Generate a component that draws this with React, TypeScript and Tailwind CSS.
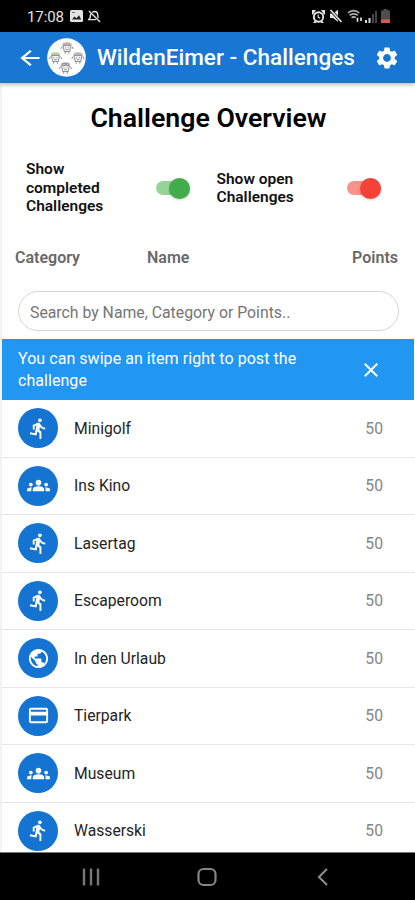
import type { IconType } from "react-icons";
import {
  MdArrowBack,
  MdClose,
  MdDirectionsRun,
  MdGroups,
  MdPayment,
  MdPublic,
  MdSettings,
} from "react-icons/md";

type TChallenge = {
  name: string;
  points: number;
  icon: IconType;
};

const challenges: TChallenge[] = [
  { name: "Minigolf", points: 50, icon: MdDirectionsRun },
  { name: "Ins Kino", points: 50, icon: MdGroups },
  { name: "Lasertag", points: 50, icon: MdDirectionsRun },
  { name: "Escaperoom", points: 50, icon: MdDirectionsRun },
  { name: "In den Urlaub", points: 50, icon: MdPublic },
  { name: "Tierpark", points: 50, icon: MdPayment },
  { name: "Museum", points: 50, icon: MdGroups },
  { name: "Wasserski", points: 50, icon: MdDirectionsRun },
];

const StatusBar = () => (
  <div className="flex h-8 shrink-0 items-center bg-black pl-[27px] pr-[25px] text-[#e4e4e4]">
    <span className="w-[43px] whitespace-nowrap pt-0.5 text-[15px] leading-none tracking-[-0.1px]">17:08</span>
    {/* picture */}
    <svg className="size-[13px]" viewBox="0 0 13 13">
      <rect width="13" height="12" rx="1.5" fill="currentColor" />
      <path d="M2 9.5l2.5-3 2 1.8 2.5-3 2.2 4.2z" fill="#222" />
      <path d="M2 2.5h3" stroke="#777" />
    </svg>
    {/* muted bell */}
    <svg className="ml-[5px] size-[13px]" viewBox="0 0 14 14" fill="none" stroke="currentColor" strokeWidth="1.5">
      <path d="M1 1l12 12M4.5 2.5c3-2 5.8-.4 6 2.3l.4 3.8M2.8 4.2L2.4 8 .8 10.4h7.7" />
    </svg>
    <div className="ml-auto flex items-center">
      {/* alarm clock */}
      <svg className="size-[13px]" viewBox="0 0 13 13">
        <path d="M0 0h4L1 4.5H0zM13 0H9l3 4.5h1zM1 13l2-2.5L4.5 13zM12 13l-2-2.5L8.5 13z" fill="currentColor" />
        <circle cx="6.5" cy="7" r="4.7" fill="none" stroke="currentColor" strokeWidth="1.9" />
        <path d="M6.2 4.5V7.3l2 1" fill="none" stroke="currentColor" strokeWidth="1.1" />
      </svg>
      {/* muted speaker */}
      <svg className="ml-[4px] size-[14px]" viewBox="0 0 14 14">
        <path d="M1 4.5h3L9 .8v12L4 9H1z" fill="currentColor" />
        <path d="M1.5 1l11 12" stroke="#000" strokeWidth="3" />
        <path d="M1.5 1l11 12" stroke="currentColor" strokeWidth="1.7" />
      </svg>
      <svg className="ml-1 h-[14px] w-[17px]" viewBox="0 0 17 14" fill="none" stroke="#b5b5b5" strokeWidth="1.7">
        <path d="M1 4c3.2-3.3 8-3.3 11.2 0M2.6 6.4c2.2-2 6-2 8.2 0M4.6 8.8c1.2-1 2.8-1 4 0" />
        <path d="M10.5 8.7v4M14 8.5v3.5" stroke="#e4e4e4" />
      </svg>
      <svg className="h-[13px] w-[14px]" viewBox="0 0 14 13">
        <path d="M1 10h2v3H1zM4.5 8h2v5h-2z" fill="#d8d8d8" />
        <path d="M8 4h2v9H8zM11 1h2v12h-2z" fill="#444" />
      </svg>
      <svg className="ml-[3px] h-[14px] w-[9px]" viewBox="0 0 9 14">
        <path d="M2.5 0h4v1.5H9V14H0V1.5h2.5z" fill="#514b49" />
        <path d="M0 10.5h9V14H0z" fill="#dc5654" />
      </svg>
    </div>
  </div>
);

const Mascot = ({ x, y, hat }: { x: number; y: number; hat: string }) => (
  <g transform={`translate(${x} ${y})`} fill="none" stroke="#77777f" strokeWidth="0.8">
    <path d="M-4-1.5h8l-1.2 6h-5.6z" fill="#f1f1f4" />
    <path d="M-5-.5l-1.2 2.5M5-.5l1.2 2.5M-1.8 4.5v2.3M1.8 4.5v2.3M-2 .8h1M1 .8h1M-1.2 2.6h2.4" />
    <path d="M-4.5-2.5C-4-5 4-5 4.5-2.5z" fill={hat} strokeWidth="0.3" />
  </g>
);

const Logo = () => (
  <svg className="ml-[5px] size-[39px]" viewBox="0 0 39 39">
    <circle cx="19.5" cy="19.5" r="19.3" fill="#fdfdfd" />
    <Mascot x={20} y={9} hat="#d9a184" />
    <Mascot x={8.5} y={19} hat="#b9dc7e" />
    <Mascot x={31} y={19} hat="#b7b7bd" />
    <Mascot x={18.5} y={29} hat="#9a9aa1" />
  </svg>
);

const AppBar = () => (
  <header className="relative flex h-[51px] shrink-0 items-center bg-[#1976d2] pl-[18px] pr-[15px] text-white shadow-[0_2px_4px_rgba(0,0,0,0.25)]">
    <MdArrowBack className="size-6 scale-x-[1.2]" />
    <Logo />
    <h1 className="ml-[11px] whitespace-nowrap text-[22.5px] font-medium leading-none tracking-[0.03px]">
      WildenEimer - Challenges
    </h1>
    <MdSettings className="ml-auto size-[26px]" />
  </header>
);

type TToggle = {
  label: string;
  color: "green" | "red";
};
const Toggle = ({ label, color }: TToggle) => (
  <div className="flex h-14 w-[190.5px] items-center">
    <span className="w-[90px] text-[15.5px] font-semibold leading-[18.5px] text-[#111]">{label}</span>
    <button
      role="switch"
      aria-checked="true"
      className={`ml-10 flex h-[14px] w-[34px] items-center justify-end rounded-full ${
        color === "green" ? "bg-[#96d399]" : "bg-[#fa928b]"
      }`}
    >
      <span
        className={`size-[21px] shrink-0 rounded-full shadow-[0_1px_3px_rgba(0,0,0,0.2)] ${
          color === "green" ? "bg-[#43ad4b]" : "bg-[#f44336]"
        }`}
      />
    </button>
  </div>
);

const ChallengeRow = ({ challenge }: { challenge: TChallenge }) => {
  const Icon = challenge.icon;
  return (
    <li className="flex h-[57.5px] shrink-0 items-center border-b border-[#e6e6e6] pl-4 pr-8">
      <div className="flex size-10 items-center justify-center rounded-full bg-[#1573d2] text-white">
        <Icon className="size-[23px]" />
      </div>
      <span className="ml-4 pt-px text-[15.7px] text-[#242424]">{challenge.name}</span>
      <span className="ml-auto pt-px text-[15.7px] text-[#858585]">{challenge.points}</span>
    </li>
  );
};

const NavigationBar = () => (
  <nav className="flex h-12 shrink-0 items-center justify-between border-t border-[#777] bg-black pl-[81px] pr-[82px]">
    <svg className="h-5 w-5" viewBox="0 0 20 20" stroke="#777" strokeWidth="2.4">
      <path d="M3 1.5v17M10 1.5v17M17 1.5v17" />
    </svg>
    <svg className="size-5" viewBox="0 0 20 20" fill="none" stroke="#858585" strokeWidth="2.2">
      <rect x="1.5" y="2" width="17" height="16" rx="5" />
    </svg>
    <svg className="size-5" viewBox="0 0 20 20" fill="none" stroke="#888" strokeWidth="2.2">
      <path d="M14 2L6 10l8 8" />
    </svg>
  </nav>
);

const App = () => {
  return (
    <div className="flex h-[900px] w-[415px] flex-col overflow-hidden bg-white font-[Roboto,sans-serif]">
      <StatusBar />
      <AppBar />
      <main className="flex min-h-0 flex-1 flex-col overflow-hidden border-l-2 border-[#f3f3f3]">
        <h2 className="mt-[19px] text-center text-[26.7px] font-semibold leading-8 text-black">
          Challenge Overview
        </h2>
        <div className="mt-[26px] flex pl-6">
          <Toggle label="Show completed Challenges" color="green" />
          <Toggle label="Show open Challenges" color="red" />
        </div>
        <div className="mt-8 flex pl-[13px] pr-[17px] text-base font-semibold leading-5 text-[#696969]">
          <span className="w-[132px]">Category</span>
          <span>Name</span>
          <span className="ml-auto">Points</span>
        </div>
        <input
          className="mx-4 mt-[23px] h-10 shrink-0 rounded-full border border-[#d5d5d5] px-[11px] pt-0.5 text-[15.8px] placeholder:text-[#757575]"
          placeholder="Search by Name, Category or Points.."
        />
        <div className="mr-px mt-2 flex h-[61px] shrink-0 items-center bg-[#2196f3] pl-4 pr-[31px] text-white">
          <p className="w-[290px] text-base leading-[22px] tracking-[0.05px]">
            You can swipe an item right to post the challenge
          </p>
          <MdClose className="ml-auto size-6" />
        </div>
        <ul className="flex flex-col">
          {challenges.map((challenge) => (
            <ChallengeRow key={challenge.name} challenge={challenge} />
          ))}
        </ul>
      </main>
      <NavigationBar />
    </div>
  );
};

export default App;
